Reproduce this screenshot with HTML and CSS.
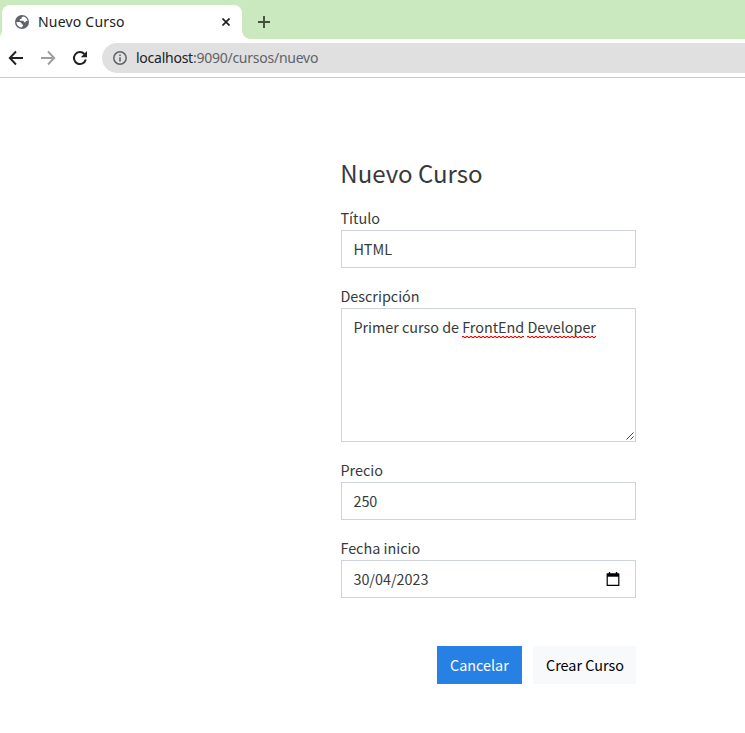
FILE: index.html
```html
<!DOCTYPE html>
<html lang="es">
<head>
<meta charset="utf-8">
<title>Nuevo Curso</title>
<link rel="stylesheet" href="styles.css">
</head>
<body>
<header class="browser">
  <div class="tabs">
    <div class="tab">
      <svg class="globe" width="14" height="14" viewBox="0 0 14 14"><circle cx="7" cy="7" r="7" fill="#5f6368"/><path d="M8.3 1.6 6.6 2.6v1.2l-1.8.5v1.4h3.4l1.2 1.5h1.3V5.9h1.9A5.6 5.6 0 0 0 8.3 1.6ZM1.4 6.9h3.5l1.8 1.3v1.4H8v1.2l-1.4 1.8A5.6 5.6 0 0 1 1.4 6.9Z" fill="#fff"/></svg>
      <span class="tab-title">Nuevo Curso</span>
      <svg class="close" width="8" height="8" viewBox="0 0 8 8"><path d="M.5.5l7 7M7.5.5l-7 7" stroke="#202124" stroke-width="1.7"/></svg>
    </div>
    <svg class="plus" width="12" height="12" viewBox="0 0 12 12"><path d="M6 0v12M0 6h12" stroke="#45503f" stroke-width="1.9"/></svg>
  </div>
  <div class="toolbar">
    <svg width="16" height="16" viewBox="0 0 16 16" fill="none" stroke="#202124" stroke-width="1.9"><path d="M15 8H2M8 1.5 1.8 8 8 14.5"/></svg>
    <svg width="16" height="16" viewBox="0 0 16 16" fill="none" stroke="#9c9ea1" stroke-width="1.9"><path d="M1 8h13M8 1.5 14.2 8 8 14.5"/></svg>
    <svg width="16" height="16" viewBox="0 0 16 16"><path d="M13.8 9.5A6 6 0 1 1 12.4 4" fill="none" stroke="#202124" stroke-width="2"/><path d="M15 1v6.2H8.8Z" fill="#202124"/></svg>
    <div class="address">
      <svg width="14" height="14" viewBox="0 0 14 14"><circle cx="7" cy="7" r="6.2" fill="none" stroke="#5f6368" stroke-width="1.5"/><path d="M7 6.2v4.3M7 3.4v1.6" stroke="#5f6368" stroke-width="1.6"/></svg>
      <span class="url"><b>localhost</b>:9090/cursos/nuevo</span>
    </div>
  </div>
</header>
<main class="form">
  <h1>Nuevo Curso</h1>
  <div class="field"><label>Título</label><div class="control">HTML</div></div>
  <div class="field"><label>Descripción</label>
    <div class="control area">Primer curso de <span class="typo">FrontEnd</span> <span class="typo">Developer</span>
      <svg class="grip" width="8" height="8" viewBox="0 0 8 8"><path d="M.5 7.5l7-7M4.5 7.5l3-3" stroke="#444" stroke-width="1"/></svg>
    </div>
  </div>
  <div class="field"><label>Precio</label><div class="control">250</div></div>
  <div class="field"><label>Fecha inicio</label>
    <div class="control date"><span>30/04/2023</span>
      <svg width="14" height="15" viewBox="0 0 14 15"><path d="M3.5 0v3M10.5 0v3" stroke="#000" stroke-width="1.4"/><path d="M1.2 2h11.6v11.3H1.2Z" fill="#fff" stroke="#000" stroke-width="1.2"/><path d="M1 1.5h12v3.2H1Z"/></svg>
    </div>
  </div>
  <div class="actions"><a class="btn primary">Cancelar</a><a class="btn light">Crear Curso</a></div>
</main>
</body>
</html>
```
FILE: styles.css
```css
* { box-sizing: border-box; }
body {
  margin: 0;
  background: #fff;
  color: #373a3c;
  font: 14.4px/24px "Noto Sans CJK SC", sans-serif;
  overflow: hidden;
}
svg { display: block; flex: none; }
.browser { font-family: "Noto Sans", sans-serif; border-bottom: 1px solid #cacbcc; height: 78px; }
.tabs { height: 39px; background: #cae9bf; display: flex; align-items: flex-end; padding-left: 2px; }
.tab {
  width: 240px; height: 34px; background: #fff; border-radius: 8px 8px 0 0;
  display: flex; align-items: center; padding: 0 12px 0 13px; position: relative;
}
.tab::before, .tab::after {
  content: ""; position: absolute; bottom: 0; width: 8px; height: 8px;
}
.tab::before { left: -8px; background: radial-gradient(circle at 0 0, #cae9bf 7.5px, #fff 8px); }
.tab::after { right: -8px; background: radial-gradient(circle at 100% 0, #cae9bf 7.5px, #fff 8px); }
.tab-title { font-size: 14px; line-height: 20px; margin-left: 9px; color: #202124; white-space: nowrap; letter-spacing: 0.2px; }
.close { margin-left: auto; }
.plus { margin: 0 0 11px 16px; }
.toolbar { height: 38px; display: flex; align-items: center; gap: 16px; padding-left: 8px; }
.address {
  flex: 1; height: 30px; margin-left: -2px; border-radius: 15px 0 0 15px; background: #e0e0e0;
  display: flex; align-items: center; padding-left: 11px; gap: 9px;
}
.url { font-size: 14px; line-height: 20px; color: #5f6368; white-space: nowrap; letter-spacing: -0.25px; }
.url b { font-weight: 400; color: #202124; }
.form { width: 295px; margin: 79px 0 0 341px; }
h1 { font-size: 24px; line-height: 32px; font-weight: 400; margin: 0 0 17px; white-space: nowrap; text-indent: -0.7px; }
.field { margin-bottom: 16px; }
.field label { display: block; white-space: nowrap; text-indent: -0.6px; }
.control { height: 38px; border: 1px solid #ced4da; padding: 6px 11.4px; white-space: nowrap; position: relative; }
.area { height: 134px; letter-spacing: -0.02px; }
.typo { position: relative; }
.typo::after {
  content: ""; position: absolute; left: 0; right: 0; bottom: -1px; height: 2px;
  background:
    linear-gradient(90deg, #f00 50%, #ff000040 50%) 0 0 / 4px 1px repeat-x,
    linear-gradient(90deg, #ff000040 50%, #f00 50%) 0 1px / 4px 1px repeat-x;
}
.grip { position: absolute; right: 1px; bottom: 1px; }
.date { display: flex; align-items: center; justify-content: space-between; padding-right: 15px; }
.actions { display: flex; justify-content: flex-end; gap: 11px; margin-top: 48px; }
.btn { height: 38px; padding: 7px 13px; white-space: nowrap; }
.primary { background: #2780e3; color: #fff; width: 85px; }
.light { background: #f8f9fa; color: #000; width: 103px; }
```
